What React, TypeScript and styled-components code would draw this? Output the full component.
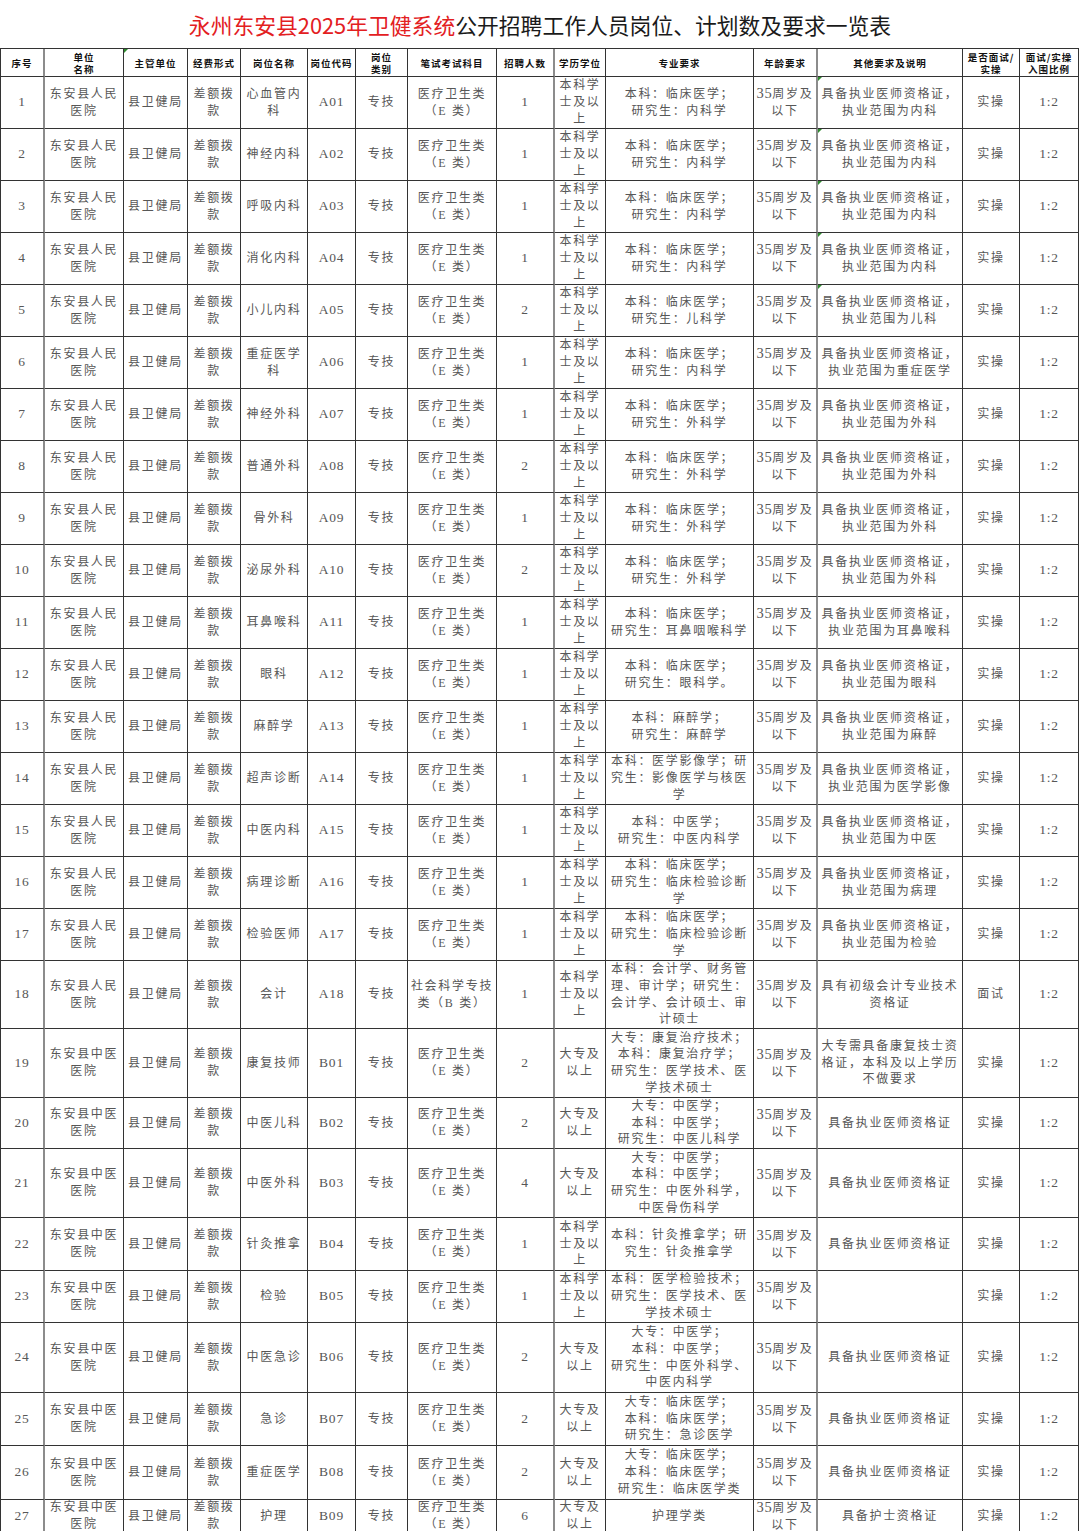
import styled, { createGlobalStyle } from "styled-components";

const GlobalStyle = createGlobalStyle`
  html, body {
    margin: 0;
    padding: 0;
    background: #fff;
  }
  body {
    overflow: hidden;
  }
`;

const COLS = "44px 79px 64px 53px 67px 48px 52px 89px 58px 51px 148px 64px 145px 57px 59px";

const Page = styled.div`
    width: 1080px;
    height: 1531px;
    overflow: hidden;
    background: #fff;
`;

const Title = styled.h1`
    margin: 0;
    height: 48px;
    display: flex;
    align-items: center;
    justify-content: center;
    font-family: "Noto Sans CJK SC", sans-serif;
    font-size: 21.8px;
    font-weight: 400;
    color: #1a1a1a;
`;

const Red = styled.span`
    color: #e3201f;
`;

const Table = styled.div`
    width: 1079px;
    box-sizing: border-box;
    border-top: 1px solid #333;
    border-left: 1px solid #333;
`;

const Row = styled.div<{ $h: number }>`
    display: grid;
    grid-template-columns: ${COLS};
    height: ${(p) => p.$h}px;
`;

const Cell = styled.div<{ $edge?: boolean; $num?: boolean; $mark?: boolean }>`
    position: relative;
    box-sizing: border-box;
    border-right: ${(p) => (p.$edge ? "2px solid #8c8c8c" : "1px solid #333")};
    border-bottom: 1px solid #333;
    display: flex;
    align-items: center;
    justify-content: center;
    text-align: center;
    white-space: pre;
    overflow: hidden;
    padding: 0 1px;
    font-family: "Liberation Serif", "Noto Sans CJK SC", serif;
    font-size: ${(p) => (p.$num ? "13.5px" : "12px")};
    letter-spacing: ${(p) => (p.$num ? "0.8px" : "1.7px")};
    line-height: 16.7px;
    color: #575757;
    &::before {
        content: "";
        display: ${(p) => (p.$mark ? "block" : "none")};
        position: absolute;
        left: 0;
        top: 0;
        border-top: 4px solid #2e8b2e;
        border-right: 4px solid transparent;
    }
`;

const HeadCell = styled(Cell)`
    font-family: "Noto Sans CJK SC", sans-serif;
    font-size: 9.5px;
    font-weight: 700;
    letter-spacing: 1px;
    line-height: 12px;
    color: #111;
`;

const Num = styled.span`
    font-family: "Liberation Serif", serif;
    font-size: 14.5px;
    letter-spacing: 0.6px;
`;

const EDGES = [0, 8, 11];

const HEAD = [
    "序号",
    "单位\n名称",
    "主管单位",
    "经费形式",
    "岗位名称",
    "岗位代码",
    "岗位\n类别",
    "笔试考试科目",
    "招聘人数",
    "学历学位",
    "专业要求",
    "年龄要求",
    "其他要求及说明",
    "是否面试/\n实操",
    "面试/实操\n入围比例",
];

type Job = {
    unit: string;
    post: string;
    code: string;
    exam?: string;
    count: number;
    edu: string;
    major: string;
    other: string;
    test?: string;
    h: number;
};

const RM = "东安县人民\n医院";
const ZY = "东安县中医\n医院";
const BK = "本科学\n士及以\n上";
const DZ = "大专及\n以上";
const E = "医疗卫生类\n（E 类）";
const ZS = "具备执业医师资格证，\n执业范围为";
const ZG = "具备执业医师资格证";

const jobs: Job[] = [
    { unit: RM, post: "心血管内\n科", code: "A01", count: 1, edu: BK, major: "本科：临床医学；\n研究生：内科学", other: ZS + "内科", h: 52 },
    { unit: RM, post: "神经内科", code: "A02", count: 1, edu: BK, major: "本科：临床医学；\n研究生：内科学", other: ZS + "内科", h: 52 },
    { unit: RM, post: "呼吸内科", code: "A03", count: 1, edu: BK, major: "本科：临床医学；\n研究生：内科学", other: ZS + "内科", h: 52 },
    { unit: RM, post: "消化内科", code: "A04", count: 1, edu: BK, major: "本科：临床医学；\n研究生：内科学", other: ZS + "内科", h: 52 },
    { unit: RM, post: "小儿内科", code: "A05", count: 2, edu: BK, major: "本科：临床医学；\n研究生：儿科学", other: ZS + "儿科", h: 52 },
    { unit: RM, post: "重症医学\n科", code: "A06", count: 1, edu: BK, major: "本科：临床医学；\n研究生：内科学", other: ZS + "重症医学", h: 52 },
    { unit: RM, post: "神经外科", code: "A07", count: 1, edu: BK, major: "本科：临床医学；\n研究生：外科学", other: ZS + "外科", h: 52 },
    { unit: RM, post: "普通外科", code: "A08", count: 2, edu: BK, major: "本科：临床医学；\n研究生：外科学", other: ZS + "外科", h: 52 },
    { unit: RM, post: "骨外科", code: "A09", count: 1, edu: BK, major: "本科：临床医学；\n研究生：外科学", other: ZS + "外科", h: 52 },
    { unit: RM, post: "泌尿外科", code: "A10", count: 2, edu: BK, major: "本科：临床医学；\n研究生：外科学", other: ZS + "外科", h: 52 },
    { unit: RM, post: "耳鼻喉科", code: "A11", count: 1, edu: BK, major: "本科：临床医学；\n研究生：耳鼻咽喉科学", other: ZS + "耳鼻喉科", h: 52 },
    { unit: RM, post: "眼科", code: "A12", count: 1, edu: BK, major: "本科：临床医学；\n研究生：眼科学。", other: ZS + "眼科", h: 52 },
    { unit: RM, post: "麻醉学", code: "A13", count: 1, edu: BK, major: "本科：麻醉学；\n研究生：麻醉学", other: ZS + "麻醉", h: 52 },
    { unit: RM, post: "超声诊断", code: "A14", count: 1, edu: BK, major: "本科：医学影像学；研\n究生：影像医学与核医\n学", other: ZS + "医学影像", h: 52 },
    { unit: RM, post: "中医内科", code: "A15", count: 1, edu: BK, major: "本科：中医学；\n研究生：中医内科学", other: ZS + "中医", h: 52 },
    { unit: RM, post: "病理诊断", code: "A16", count: 1, edu: BK, major: "本科：临床医学；\n研究生：临床检验诊断\n学", other: ZS + "病理", h: 52 },
    { unit: RM, post: "检验医师", code: "A17", count: 1, edu: BK, major: "本科：临床医学；\n研究生：临床检验诊断\n学", other: ZS + "检验", h: 52 },
    { unit: RM, post: "会计", code: "A18", exam: "社会科学专技\n类（B 类）", count: 1, edu: BK, major: "本科：会计学、财务管\n理、审计学；研究生：\n会计学、会计硕士、审\n计硕士", other: "具有初级会计专业技术\n资格证", test: "面试", h: 68 },
    { unit: ZY, post: "康复技师", code: "B01", count: 2, edu: DZ, major: "大专：康复治疗技术；\n本科：康复治疗学；\n研究生：医学技术、医\n学技术硕士", other: "大专需具备康复技士资\n格证，本科及以上学历\n不做要求", h: 69 },
    { unit: ZY, post: "中医儿科", code: "B02", count: 2, edu: DZ, major: "大专：中医学；\n本科：中医学；\n研究生：中医儿科学", other: ZG, h: 51 },
    { unit: ZY, post: "中医外科", code: "B03", count: 4, edu: DZ, major: "大专：中医学；\n本科：中医学；\n研究生：中医外科学，\n中医骨伤科学", other: ZG, h: 69 },
    { unit: ZY, post: "针灸推拿", code: "B04", count: 1, edu: BK, major: "本科：针灸推拿学；研\n究生：针灸推拿学", other: ZG, h: 53 },
    { unit: ZY, post: "检验", code: "B05", count: 1, edu: BK, major: "本科：医学检验技术；\n研究生：医学技术、医\n学技术硕士", other: "", h: 52 },
    { unit: ZY, post: "中医急诊", code: "B06", count: 2, edu: DZ, major: "大专：中医学；\n本科：中医学；\n研究生：中医外科学、\n中医内科学", other: ZG, h: 70 },
    { unit: ZY, post: "急诊", code: "B07", count: 2, edu: DZ, major: "大专：临床医学；\n本科：临床医学；\n研究生：急诊医学", other: ZG, h: 53 },
    { unit: ZY, post: "重症医学", code: "B08", count: 2, edu: DZ, major: "大专：临床医学；\n本科：临床医学；\n研究生：临床医学类", other: ZG, h: 54 },
    { unit: ZY, post: "护理", code: "B09", count: 6, edu: DZ, major: "护理学类", other: "具备护士资格证", h: 33 },
];

export default function App() {
    return (
        <Page>
            <GlobalStyle />
            <Title>
                <Red>永州东安县2025年卫健系统</Red>公开招聘工作人员岗位、计划数及要求一览表
            </Title>
            <Table>
                <Row $h={28}>
                    {HEAD.map((t, i) => (
                        <HeadCell key={i} $edge={EDGES.includes(i)} $mark={i === 2}>
                            {t}
                        </HeadCell>
                    ))}
                </Row>
                {jobs.map((j, i) => (
                    <Row key={j.code} $h={j.h}>
                        <Cell $edge $num>{i + 1}</Cell>
                        <Cell>{j.unit}</Cell>
                        <Cell>县卫健局</Cell>
                        <Cell>{"差额拨\n款"}</Cell>
                        <Cell>{j.post}</Cell>
                        <Cell $num>{j.code}</Cell>
                        <Cell>专技</Cell>
                        <Cell>{j.exam ?? E}</Cell>
                        <Cell $edge $num>{j.count}</Cell>
                        <Cell>{j.edu}</Cell>
                        <Cell>{j.major}</Cell>
                        <Cell $edge>
                            <span>
                                <Num>35</Num>周岁及{"\n"}以下
                            </span>
                        </Cell>
                        <Cell $mark={i < 5}>{j.other}</Cell>
                        <Cell>{j.test ?? "实操"}</Cell>
                        <Cell $num>1:2</Cell>
                    </Row>
                ))}
            </Table>
        </Page>
    );
}
